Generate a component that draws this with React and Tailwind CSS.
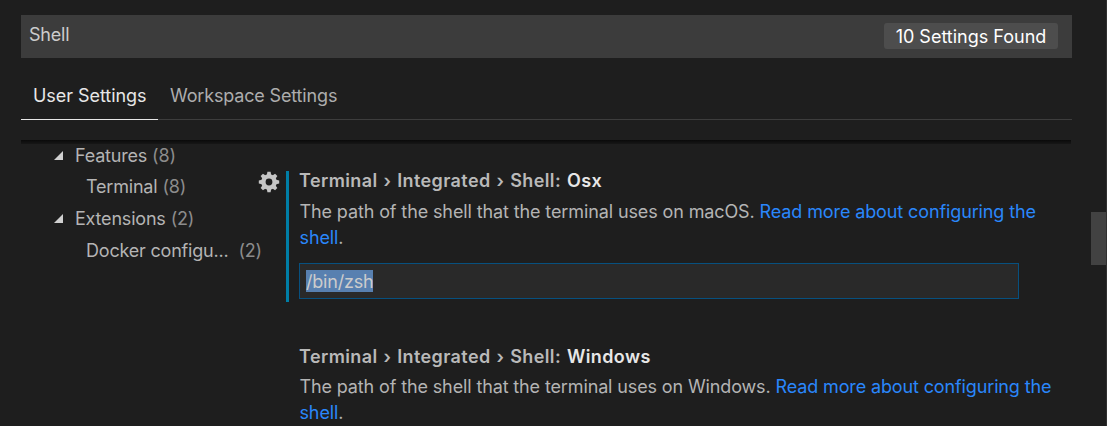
const TEETH = [0, 45, 90, 135, 180, 225, 270, 315];

function Gear() {
  return (
    <svg viewBox="0 0 22 22" className="mt-[4.5px] h-[22px] w-[22px] shrink-0">
      <g fill="#c5c5c5">
        {TEETH.map((a) => (
          <path key={a} d="M8.6 5 L9.4 0.8 H12.6 L13.4 5 Z" transform={`rotate(${a} 11 11)`} />
        ))}
      </g>
      <circle cx="11" cy="11" r="5.6" fill="none" stroke="#c5c5c5" strokeWidth="4.4" />
    </svg>
  );
}

function Twistie() {
  return (
    <svg viewBox="0 0 9 9" className="mr-[12px] h-[9px] w-[9px] shrink-0">
      <path d="M9 0 V9 H0 Z" fill="#d0d0d0" />
    </svg>
  );
}

function Title({ name }) {
  return (
    <h2 className="h-[26px] whitespace-nowrap font-semibold leading-[26px] tracking-[0.4px] text-[#b9b9b9] [word-spacing:0.9px]">
      Terminal › Integrated › Shell: <span className="text-[#e7e7e7]">{name}</span>
    </h2>
  );
}

function Description({ os, className }) {
  return (
    <p className={`whitespace-nowrap leading-[26px] text-[#b4b4b4] ${className}`}>
      The path of the shell that the terminal uses on {os}.{" "}
      <a className="text-[#2a87fb]">Read more about configuring the</a>
      <br />
      <a className="text-[#2a87fb]">shell</a>.
    </p>
  );
}

export default function App() {
  return (
    <div className="flex h-[426px] w-[1107px] overflow-hidden bg-[#1e1e1e] font-['Inter','Liberation_Sans',sans-serif] text-[18px]">
      <div className="flex w-[1072px] shrink-0 flex-col pl-[21px] pt-[15px]">
        <div className="flex h-[43px] shrink-0 items-start justify-between bg-[#3c3c3c] pl-2 pr-[14px] pt-2">
          <span className="leading-[24px] tracking-[-0.2px] text-[#cccccc]">Shell</span>
          <span className="h-[26px] w-[174px] whitespace-nowrap rounded-[3px] bg-[#4d4d4d] text-center leading-[27px] text-white">
            10 Settings Found
          </span>
        </div>
        <div className="mt-[14px] flex h-[48px] shrink-0 whitespace-nowrap border-b border-[#3d3d3d] tracking-[-0.05px]">
          <div className="h-[48px] w-[137px] border-b border-[#e7e7e7] pl-3 leading-[48px] text-[#e7e7e7]">User Settings</div>
          <div className="pl-3 leading-[48px] tracking-[-0.16px] text-[#adadad]">Workspace Settings</div>
        </div>
        <div className="mr-px mt-5 h-1 shrink-0 bg-linear-to-b from-[#0a0a0a] to-[#171717]" />
        <div className="flex">
          <nav className="flex w-[237px] shrink-0 flex-col whitespace-nowrap pl-[33px] tracking-[-0.2px] text-[#b4b4b4]">
            <div className="flex h-[26px] items-center pb-[3px]"><Twistie />Features<span className="pl-[5px] text-[#8c8c8c]">(8)</span></div>
            <div className="flex h-[32px] items-center pl-8">Terminal<span className="pl-[5px] text-[#8c8c8c]">(8)</span></div>
            <div className="flex h-[32px] items-center"><Twistie />Extensions<span className="pl-[5px] text-[#8c8c8c]">(2)</span></div>
            <div className="flex h-[32px] items-center pl-8">Docker configu...<span className="pl-[10px] text-[#8c8c8c]">(2)</span></div>
          </nav>
          <main className="flex flex-col pt-[27px]">
            <section className="flex h-[131px]">
              <div className="-mt-[5px] w-[28px] shrink-0"><Gear /></div>
              <div className="w-[3px] shrink-0 bg-[#007ea6]" />
              <div className="-mt-[3px] pl-[10px]">
                <Title name="Osx" />
                <Description os="macOS" className="mt-[5px] pl-[0.5px] tracking-[-0.115px]" />
                <div className="mt-[12px] flex h-[36px] w-[720px] items-center border border-[#07507f] bg-[#292929] pl-[6px]">
                  <span className="h-[22px] bg-[#5880b0] leading-[23px] tracking-[-0.2px] text-[#cccccc]">/bin/zsh</span>
                </div>
              </div>
            </section>
            <section className="mt-[42px] pl-[41px]">
              <Title name="Windows" />
              <Description os="Windows" className="mt-[4px] pl-[0.5px] tracking-[-0.13px]" />
            </section>
          </main>
        </div>
      </div>
      <div className="ml-[19px] mt-[212px] h-[53px] w-[15px] shrink-0 bg-[#424242]" />
      <div className="h-full w-px shrink-0 bg-[#303030]" />
    </div>
  );
}
